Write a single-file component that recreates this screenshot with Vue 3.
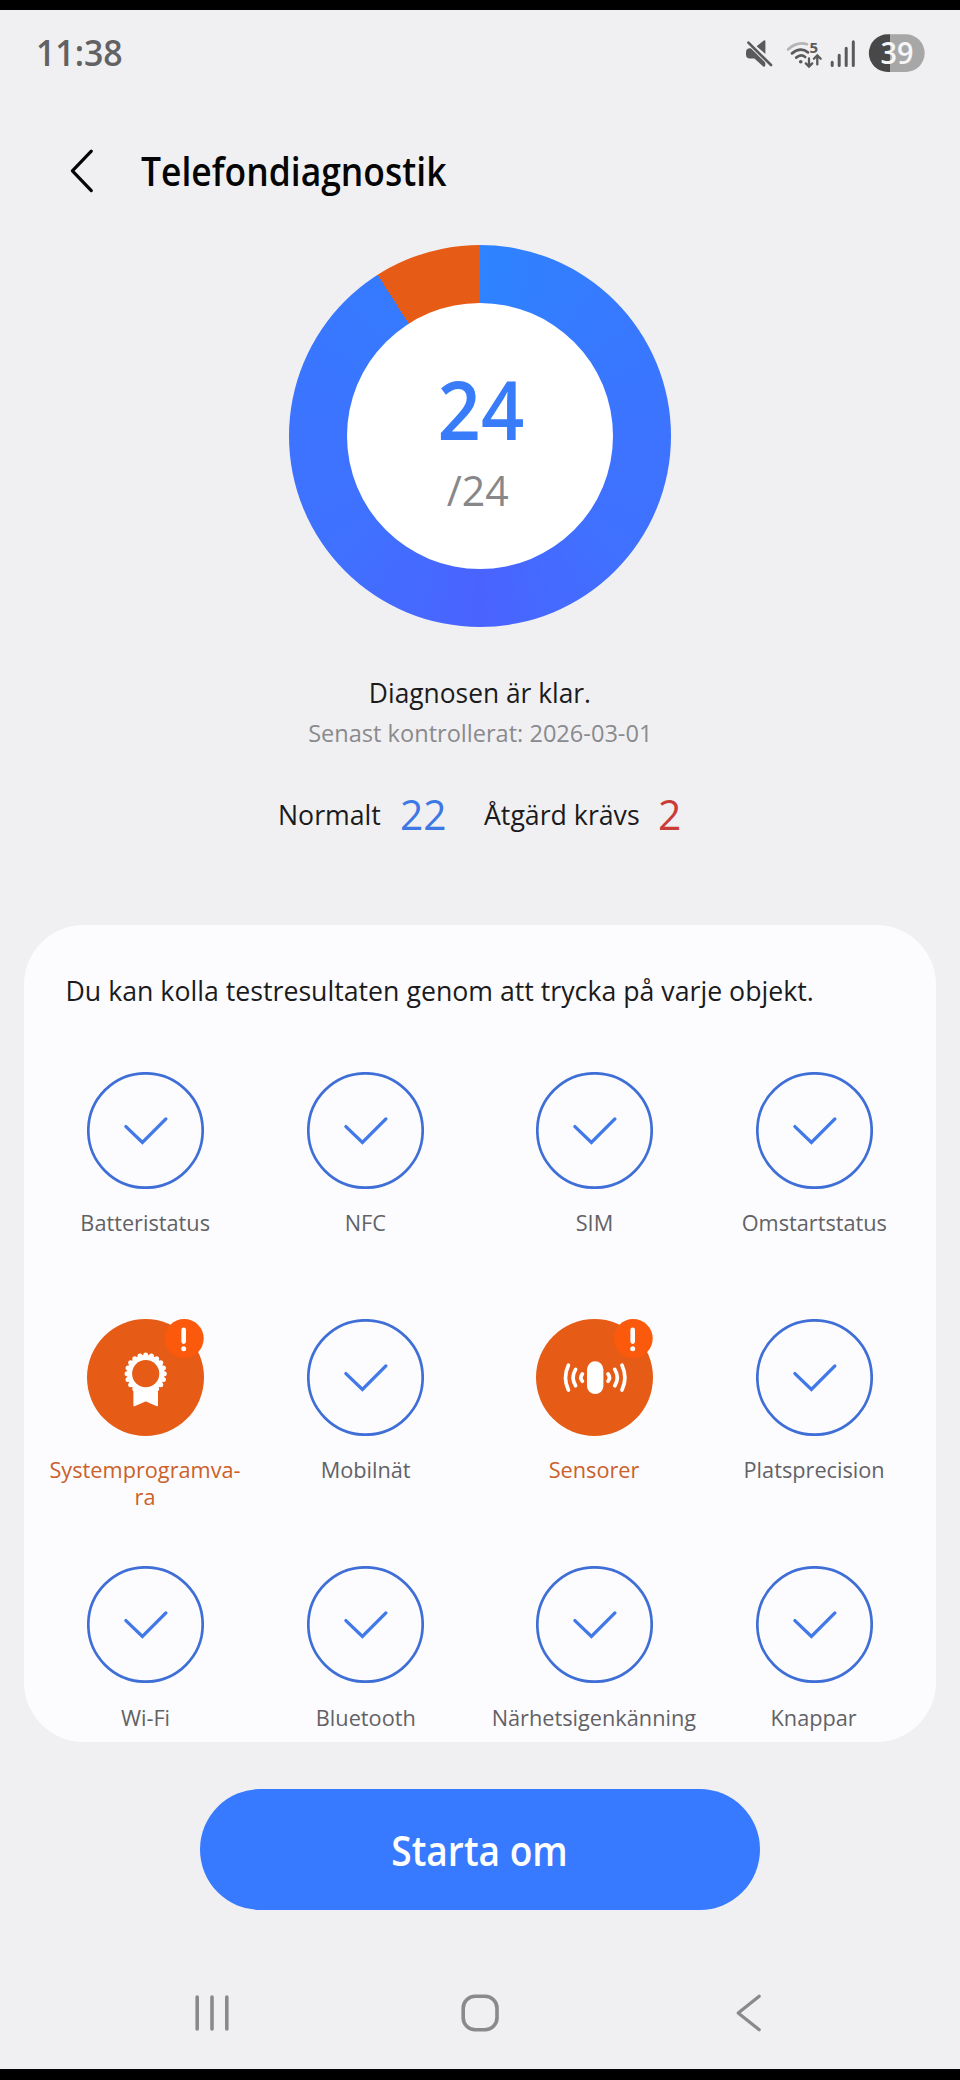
<script setup>
const items = [
  { lines: ['Batteristatus'] },
  { lines: ['NFC'] },
  { lines: ['SIM'] },
  { lines: ['Omstartstatus'] },
  { lines: ['Systemprogramva-', 'ra'], icon: 'award' },
  { lines: ['Mobilnät'] },
  { lines: ['Sensorer'], icon: 'sensor' },
  { lines: ['Platsprecision'] },
  { lines: ['Wi-Fi'] },
  { lines: ['Bluetooth'] },
  { lines: ['Närhetsigenkänning'] },
  { lines: ['Knappar'] },
]

// Scalloped rim of the award rosette
const scallops = Array.from({ length: 20 }, (_, i) => {
  const a = (i * Math.PI) / 10
  return { x: 58.7 + 18.6 * Math.sin(a), y: 54.7 - 18.6 * Math.cos(a) }
})
</script>

<template>
  <div class="screen">
    <header class="status">
      <span class="time">11:38</span>
      <svg class="status-icons" width="190" height="84" viewBox="740 10 190 84">
        <g fill="#5a5a5c">
          <path d="M756.6 46.2 763.8 40.5Q765.4 39.6 765.4 41.3V54Z" />
          <path d="M750 48.2H752.2L765.3 62V65.6Q764.8 67.4 763.2 66.6L754.4 58.6H750Q746 58.6 746 54.5V52.3Q746 48.2 750 48.2Z" />
        </g>
        <path d="M748.4 42.6 771 65" stroke="#f0f0f2" stroke-width="4.4" />
        <path d="M748.4 42.6 771 65" stroke="#5a5a5c" stroke-width="2.7" stroke-linecap="round" />
        <g fill="none" stroke="#5a5a5c" stroke-width="2.7" stroke-linecap="round">
          <path d="M788 49.4Q797 41.4 807 44.2" stroke="#b4b4b6" />
          <path d="M792 53.4Q800.5 46.4 808 52.4" />
          <path d="M796.2 57.6Q801 53.6 805.2 57" />
          <path d="M809 58.4V66.2M805.8 63.4 809 66.6 812.2 63.4" stroke-width="2.3" />
          <path d="M817.3 64.4V56M813.9 58.8 817.3 55.4 820.7 58.8" stroke-width="2.3" />
        </g>
        <circle cx="800.7" cy="61.7" r="1.8" fill="#5a5a5c" />
        <text x="809.4" y="53.4" class="band">5</text>
        <path d="M832.2 62.2V65.4M839.2 55.2V65.4M846.2 48.2V65.4M853.3 41.8V65.4" stroke="#5a5a5c" stroke-width="3" stroke-linecap="round" />
        <path d="M890 34.3V72H887.7A18.85 18.85 0 0 1 887.7 34.3Z" fill="#484849" />
        <path d="M890 34.3H905.8A18.85 18.85 0 0 1 905.8 72H890Z" fill="#a7a7a8" />
        <text x="897" y="64.2" class="battery" text-anchor="middle" textLength="33" lengthAdjust="spacingAndGlyphs">39</text>
      </svg>
    </header>

    <div class="header">
      <svg width="26" height="46" viewBox="69 148 26 46">
        <path d="M91.3 151.2 72.4 170.8 91.3 190.6" fill="none" stroke="#050505" stroke-width="3.2" stroke-linecap="round" stroke-linejoin="round" />
      </svg>
      <h1>Telefondiagnostik</h1>
    </div>

    <div class="donut">
      <div class="hole">
        <span class="done">24</span>
        <span class="total">/24</span>
      </div>
    </div>

    <p class="message">Diagnosen är klar.</p>
    <p class="checked">Senast kontrollerat: 2026-03-01</p>

    <div class="counts">
      <span class="word">Normalt</span>
      <span class="num blue">22</span>
      <span class="word">Åtgärd krävs</span>
      <span class="num red">2</span>
    </div>

    <section class="card">
      <p class="hint">Du kan kolla testresultaten genom att trycka på varje objekt.</p>
      <div class="grid">
        <div v-for="item in items" :key="item.lines[0]" class="item" :class="{ warn: item.icon }">
          <svg width="117" height="117" viewBox="0 0 117 117">
            <template v-if="!item.icon">
              <circle cx="58.5" cy="58.5" r="57.2" fill="none" stroke="#3f6fd6" stroke-width="2.7" />
              <path d="M38.9 54.6 55.4 70.5 78.9 46.9" fill="none" stroke="#4179e8" stroke-width="3.3" stroke-linecap="round" />
            </template>
            <template v-else>
              <circle cx="58.5" cy="58.5" r="58.5" fill="#e65c17" />
              <template v-if="item.icon === 'award'">
                <circle v-for="(s, i) in scallops" :key="i" :cx="s.x" :cy="s.y" r="2.5" fill="#fff" />
                <circle cx="58.7" cy="54.7" r="18.8" fill="#fff" />
                <path d="M47.2 66H70.2V86.4L58.7 81.6 47.2 86.4Z" fill="#fff" stroke="#fff" stroke-width="1.6" stroke-linejoin="round" />
                <circle cx="58.7" cy="54.7" r="13.6" fill="#e65c17" />
              </template>
              <template v-else>
                <rect x="51" y="42.3" width="16.4" height="32.8" rx="8.2" fill="#fff" />
                <g fill="none" stroke="#fff" stroke-width="3.7" stroke-linecap="round">
                  <path d="M32.4 46.2Q26.6 58.7 32.4 71M39.6 50.4Q34.6 58.7 39.6 66.8M46.4 55Q43.4 58.7 46.4 62.2" />
                  <path d="M86 46.2Q91.8 58.7 86 71M78.8 50.4Q83.8 58.7 78.8 66.8M72 55Q75 58.7 72 62.2" />
                </g>
              </template>
              <circle cx="97.2" cy="19.5" r="19.5" fill="#fb590b" />
              <path d="M96.7 10.8V22.6" stroke="#fff" stroke-width="4.6" stroke-linecap="round" />
              <circle cx="96.7" cy="29.7" r="2.5" fill="#fff" />
            </template>
          </svg>
          <div class="label"><span v-for="line in item.lines" :key="line">{{ line }}</span></div>
        </div>
      </div>
    </section>

    <button class="restart"><span>Starta om</span></button>

    <nav class="nav">
      <svg width="40" height="44" viewBox="0 0 40 44">
        <path d="M5.2 6V38M20 6V38M34.8 6V38" stroke="#8a8a8c" stroke-width="3.6" stroke-linecap="round" />
      </svg>
      <svg width="40" height="44" viewBox="0 0 40 44">
        <rect x="3.2" y="5.2" width="33.8" height="33.6" rx="12" fill="none" stroke="#8a8a8c" stroke-width="3.6" />
      </svg>
      <svg width="40" height="44" viewBox="0 0 40 44">
        <path d="M31.2 5.2 10.2 22 31.2 38.8" fill="none" stroke="#8a8a8c" stroke-width="3.3" stroke-linecap="round" stroke-linejoin="round" />
      </svg>
    </nav>
  </div>
</template>

<style>
body {
  background: #f0f0f2;
}
</style>

<style scoped>
.screen {
  box-sizing: border-box;
  width: 960px;
  height: 2080px;
  display: flex;
  flex-direction: column;
  border-top: 10px solid #000;
  border-bottom: 11px solid #000;
  background: #f0f0f2;
  font-family: "Open Sans", "Noto Sans", sans-serif;
  color: #1b1b1d;
  overflow: hidden;
}

p,
h1 {
  margin: 0;
  font-weight: 400;
  white-space: nowrap;
}

.status {
  display: flex;
  justify-content: space-between;
  align-items: center;
  height: 84px;
  padding: 0 30px 0 36px;
}

.time {
  font-size: 36px;
  font-weight: 600;
  line-height: 40px;
  color: #626264;
  transform: translateY(1px) scaleX(0.94);
  transform-origin: left;
}

.band {
  font-size: 15px;
  font-weight: 700;
  fill: #5a5a5c;
}

.battery {
  font-size: 31px;
  font-weight: 600;
  fill: #f6f6f6;
}

.header {
  box-sizing: border-box;
  display: flex;
  align-items: center;
  gap: 46px;
  height: 151px;
  padding: 2px 0 0 69px;
}

h1 {
  font-size: 40px;
  font-weight: 600;
  line-height: 50px;
  color: #050506;
  transform: scaleX(0.886);
  transform-origin: left;
}

.donut {
  box-sizing: border-box;
  align-self: center;
  width: 382px;
  height: 382px;
  padding: 58px;
  border-radius: 50%;
  background: conic-gradient(#2e83ff 0%, #367aff 12%, #3c73ff 25%, #4070ff 37%, #4a63ff 50%, #4070ff 63%, #3c73ff 75%, #367aff 91%, #e65c17 91%);
}

.hole {
  box-sizing: border-box;
  display: flex;
  flex-direction: column;
  align-items: center;
  width: 266px;
  height: 266px;
  padding-top: 60px;
  border-radius: 50%;
  background: #fff;
}

.done {
  font-size: 82px;
  font-weight: 600;
  line-height: 90px;
  color: #387cfa;
  transform: translateX(1px) scaleX(0.923);
}

.total {
  margin-top: 12px;
  font-size: 42px;
  line-height: 50px;
  color: #88888a;
  transform: translateX(-2px) scaleX(0.978);
}

.message {
  align-self: center;
  margin-top: 46px;
  font-size: 27.5px;
  line-height: 40px;
  transform: scaleX(0.958);
}

.checked {
  align-self: center;
  margin-top: 3px;
  font-size: 24px;
  line-height: 34px;
  color: #8a8a8d;
  transform: scaleX(0.982);
}

.counts {
  display: grid;
  grid-template-columns: 122px 84px 174px auto;
  margin-top: 34px;
  padding-left: 278px;
  line-height: 60px;
}

.counts span {
  transform-origin: left;
  white-space: nowrap;
}

.word {
  font-size: 28px;
  transform: scaleX(0.953);
}

.num {
  font-size: 42px;
  transform: scaleX(0.97);
}

.blue {
  color: #3d78e4;
}

.red {
  color: #c93c38;
}

.card {
  box-sizing: border-box;
  height: 817px;
  margin: 81px 24px 0;
  padding: 46px 0 0 11.5px;
  border-radius: 60px;
  background: #fcfcfe;
  overflow: hidden;
}

.hint {
  padding-left: 29.5px;
  font-size: 27.5px;
  line-height: 40px;
  transform: scaleX(0.971);
  transform-origin: 29.5px 50%;
}

.grid {
  display: grid;
  grid-template-columns: 220px 220px 237px 203px;
  grid-auto-rows: 247.3px;
  margin-top: 60.7px;
}

.item {
  display: flex;
  flex-direction: column;
  align-items: center;
}

.item svg {
  flex: none;
}

.label {
  display: flex;
  flex-direction: column;
  align-items: center;
  margin-top: 21.5px;
  font-size: 22.5px;
  line-height: 26.5px;
  color: #626266;
  white-space: nowrap;
  transform: scaleX(0.965);
}

.warn .label {
  color: #cb602b;
}

.restart {
  flex: none;
  align-self: center;
  width: 560px;
  height: 121px;
  margin-top: 47px;
  padding: 0;
  border: 0;
  border-radius: 60.5px;
  background: #387aff;
  color: #fff;
  font: 600 41px/60px "Open Sans", "Noto Sans", sans-serif;
}

.restart span {
  display: inline-block;
  transform: scaleX(0.905);
}

.nav {
  display: grid;
  grid-template-columns: repeat(3, 268px);
  justify-content: center;
  justify-items: center;
  margin-top: 81px;
}
</style>
